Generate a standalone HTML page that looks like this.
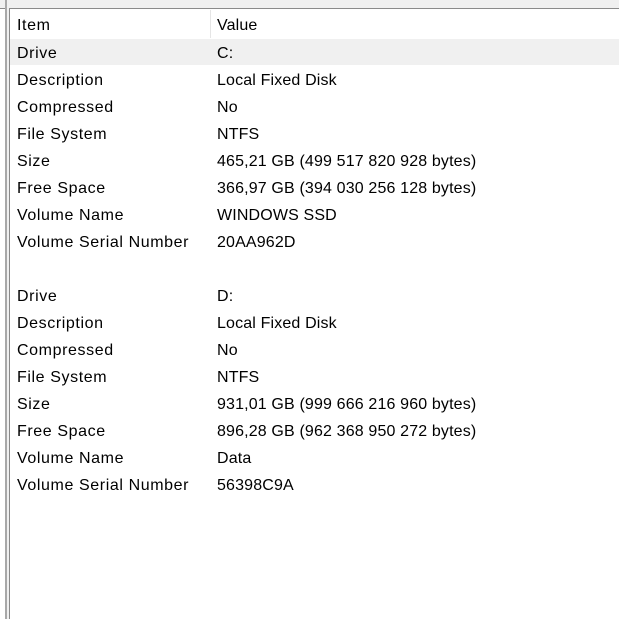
<!DOCTYPE html>
<html><head><style>
body{margin:0;width:619px;height:619px;overflow:hidden;background:#fff;position:relative;font-family:"Liberation Sans",sans-serif;font-size:16px;letter-spacing:0.6px;color:#000}
.top{position:absolute;left:0;top:0;width:619px;height:8px;background:#f0f0f0}
.tl{position:absolute;left:0;top:8px;width:619px;height:1px;background:#8a8a8a}
.l1{position:absolute;left:5px;top:0;width:2px;height:619px;background:#a8a8a8}
.l2{position:absolute;left:9px;top:8px;width:1px;height:611px;background:#8a8a8a}
.lg{position:absolute;left:7px;top:8px;width:2px;height:611px;background:#f0f0f0}
.sep{position:absolute;left:210px;top:10px;width:1px;height:28px;background:#e5e5e5}
.sel{position:absolute;left:10px;top:39px;width:609px;height:26px;background:#f0f0f0}
.r{position:absolute;left:17px;height:27px;line-height:27px;white-space:nowrap}
.v{position:absolute;left:217px;height:27px;line-height:27px;white-space:nowrap;letter-spacing:0.15px}
</style></head><body>
<div class="top"></div><div class="tl"></div><div class="l1"></div><div class="lg"></div><div class="l2"></div>
<div class="sep"></div><div class="sel"></div>
<div class="r" style="top:12px">Item</div><div class="v" style="top:12px">Value</div>
<div class="r" style="top:40px">Drive</div><div class="v" style="top:40px">C:</div>
<div class="r" style="top:67px">Description</div><div class="v" style="top:67px">Local Fixed Disk</div>
<div class="r" style="top:94px">Compressed</div><div class="v" style="top:94px">No</div>
<div class="r" style="top:121px">File System</div><div class="v" style="top:121px">NTFS</div>
<div class="r" style="top:148px">Size</div><div class="v" style="top:148px">465,21 GB (499 517 820 928 bytes)</div>
<div class="r" style="top:175px">Free Space</div><div class="v" style="top:175px">366,97 GB (394 030 256 128 bytes)</div>
<div class="r" style="top:202px">Volume Name</div><div class="v" style="top:202px">WINDOWS SSD</div>
<div class="r" style="top:229px">Volume Serial Number</div><div class="v" style="top:229px">20AA962D</div>
<div class="r" style="top:283px">Drive</div><div class="v" style="top:283px">D:</div>
<div class="r" style="top:310px">Description</div><div class="v" style="top:310px">Local Fixed Disk</div>
<div class="r" style="top:337px">Compressed</div><div class="v" style="top:337px">No</div>
<div class="r" style="top:364px">File System</div><div class="v" style="top:364px">NTFS</div>
<div class="r" style="top:391px">Size</div><div class="v" style="top:391px">931,01 GB (999 666 216 960 bytes)</div>
<div class="r" style="top:418px">Free Space</div><div class="v" style="top:418px">896,28 GB (962 368 950 272 bytes)</div>
<div class="r" style="top:445px">Volume Name</div><div class="v" style="top:445px">Data</div>
<div class="r" style="top:472px">Volume Serial Number</div><div class="v" style="top:472px">56398C9A</div>
</body></html>
